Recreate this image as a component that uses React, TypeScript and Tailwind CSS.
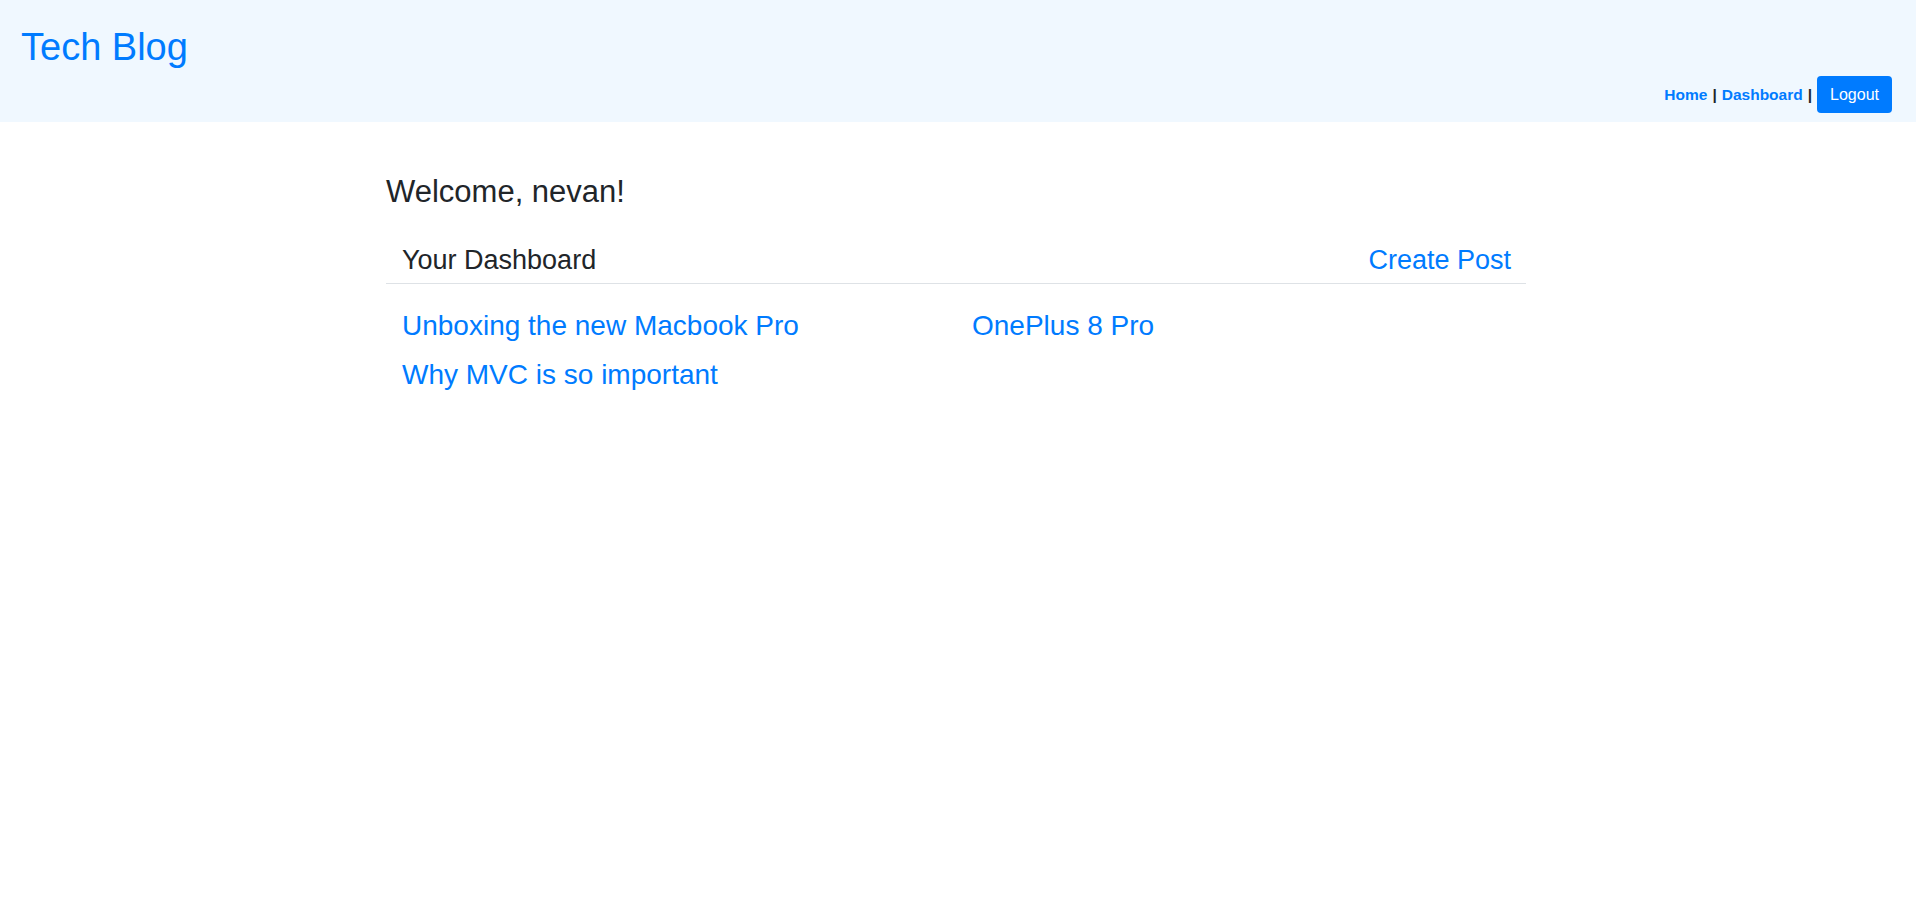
import React from 'react';

const posts = ['Unboxing the new Macbook Pro', 'OnePlus 8 Pro', 'Why MVC is so important'];

const Header = () => (
  <header className="flex h-[122px] justify-between bg-[#f0f8ff]">
    <h1 className="pl-[21px] pt-[28px] text-[38px] leading-none text-[#007bff]">Tech Blog</h1>
    <nav className="flex items-center self-end pb-[9px] pr-[24px] text-[15.5px] font-bold text-[#212529]">
      <a href="#" className="text-[#007bff]">Home</a>
      <span className="px-[5px]">|</span>
      <a href="#" className="text-[#007bff]">Dashboard</a>
      <span className="pl-[5px]">|</span>
      <button className="ml-[5px] h-[37px] rounded-[4px] bg-[#007bff] px-[13px] text-[16px] font-normal text-white">
        Logout
      </button>
    </nav>
  </header>
);

export default function App() {
  return (
    <div className="min-h-screen bg-white text-[#212529]" style={{ fontFamily: '"Liberation Sans", Arial, sans-serif' }}>
      <Header />
      <main className="ml-[386px] w-[1140px]">
        <h2 className="mt-[54px] text-[31px] leading-none">Welcome, nevan!</h2>
        <div className="mt-[40px] flex justify-between border-b border-[#dee2e6] pb-[9px] pl-[16px] pr-[15px] text-[27px] leading-none">
          <span>Your Dashboard</span>
          <a href="#" className="text-[#007bff]">Create Post</a>
        </div>
        <div className="mt-[28px] grid grid-cols-2 gap-y-[21px] text-[28px] leading-none">
          {posts.map((p) => (
            <a key={p} href="#" className="px-[16px] text-[#007bff]">{p}</a>
          ))}
        </div>
      </main>
    </div>
  );
}
